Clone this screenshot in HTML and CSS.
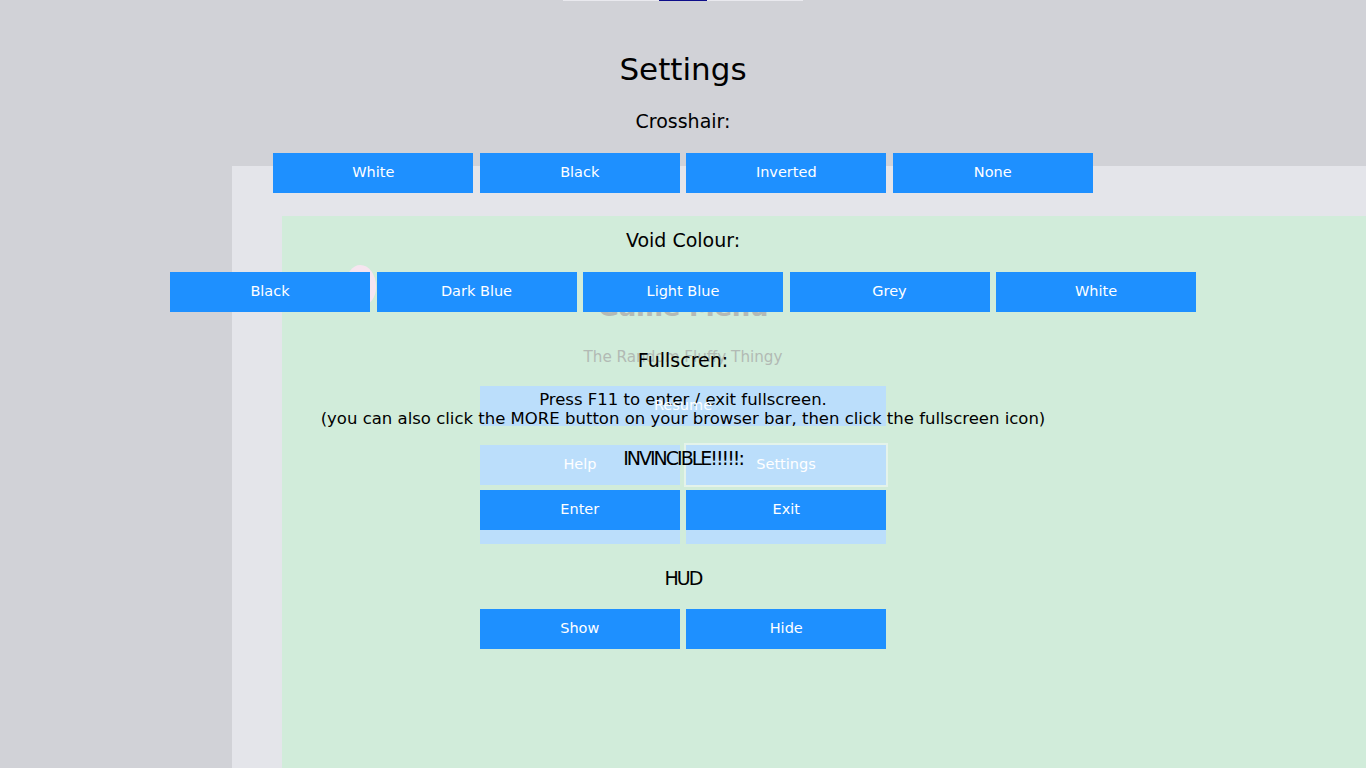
FILE: index.html
```html
<!DOCTYPE html>
<html lang="en">
<head>
<meta charset="utf-8">
<title>Settings</title>
<link rel="stylesheet" href="styles.css">
</head>
<body>
<div class="stage">
  <div class="topbar"><div class="thumb"></div></div>

  <div class="panel-outer"><div class="panel-inner"></div></div>

  <div class="menu">
    <div class="menu-title-wrap">
      <div class="blob"></div>
      <div class="menu-title">Game Menu</div>
    </div>
    <div class="menu-sub">The Random Fluffy Thingy</div>
    <div class="menu-row"><div class="mbtn wide"><span class="mbtn-top">Resume</span></div></div>
    <div class="menu-row">
      <div class="mbtn">Help</div>
      <div class="mbtn selected">Settings</div>
    </div>
    <div class="menu-row">
      <div class="mbtn"></div>
      <div class="mbtn"></div>
    </div>
  </div>

  <div class="settings">
    <h1 class="title">Settings</h1>

    <h3 class="label">Crosshair:</h3>
    <div class="row">
      <button class="btn">White</button>
      <button class="btn">Black</button>
      <button class="btn">Inverted</button>
      <button class="btn">None</button>
    </div>

    <h3 class="label">Void Colour:</h3>
    <div class="row">
      <button class="btn">Black</button>
      <button class="btn">Dark Blue</button>
      <button class="btn">Light Blue</button>
      <button class="btn">Grey</button>
      <button class="btn">White</button>
    </div>

    <h3 class="label label-tight">Fullscren:</h3>
    <p class="note">Press F11 to enter / exit fullscreen.<br>(you can also click the MORE button on your browser bar, then click the fullscreen icon)</p>

    <h3 class="label label-inv">INVINCIBLE!!!!!:</h3>
    <div class="row">
      <button class="btn">Enter</button>
      <button class="btn">Exit</button>
    </div>

    <h3 class="label label-hud">HUD</h3>
    <div class="row">
      <button class="btn">Show</button>
      <button class="btn">Hide</button>
    </div>
  </div>
</div>
</body>
</html>
```

FILE: styles.css
```css
* { box-sizing: border-box; }

html, body {
  margin: 0;
  padding: 0;
}

body {
  background: #d1d2d7;
  font-family: "DejaVu Sans", "Noto Sans", sans-serif;
  color: #000;
  overflow: hidden;
}

.stage {
  display: grid;
  width: 1366px;
  height: 768px;
  overflow: hidden;
}

.stage > * {
  grid-area: 1 / 1;
}

/* top scroll indicator */
.topbar {
  justify-self: center;
  align-self: start;
  width: 240px;
  height: 1px;
  background: #e9e9ee;
  padding-left: 96px;
  display: flex;
}
.thumb {
  width: 48px;
  height: 1px;
  background: #0e0e8a;
}

/* background panels */
.panel-outer {
  margin: 166px 0 0 232px;
  background: #e4e5ea;
  padding: 50px 0 0 50px;
  display: flex;
}
.panel-inner {
  flex: 1;
  background: #d1ecda;
}

/* faded game menu behind */
.menu {
  display: flex;
  flex-direction: column;
  align-items: center;
  padding-top: 288px;
}
.menu-title-wrap {
  position: relative;
}
.menu-title {
  font-size: 26px;
  line-height: 38px;
  color: #b4bab5;
  font-weight: bold;
  letter-spacing: -0.3px;
}
.blob {
  position: absolute;
  left: -252px;
  top: -23px;
  width: 30px;
  height: 40px;
  border-radius: 50% 55% 45% 45%;
  background: #f6e5f0;
}
.menu-sub {
  margin-top: 22px;
  font-size: 15.2px;
  line-height: 19px;
  color: #b2bab4;
}
.menu-row {
  display: flex;
  gap: 6px;
  margin-top: 19px;
}
.mbtn {
  width: 200px;
  height: 40px;
  background: #bbdefb;
  color: #fff;
  font-size: 14.5px;
  padding-bottom: 2px;
  display: flex;
  align-items: center;
  justify-content: center;
}
.mbtn.wide {
  width: 406px;
}
.mbtn-top {
  position: relative;
  z-index: 3;
}
.mbtn.selected {
  outline: 2px solid #e4f3ea;
}

/* settings overlay */
.settings {
  position: relative;
  z-index: 2;
  display: flex;
  flex-direction: column;
  align-items: center;
  padding-top: 50px;
}
.title {
  margin: 0 0 21px;
  font-size: 31px;
  line-height: 38px;
  font-weight: normal;
}
.label {
  margin: 0 0 20px;
  font-size: 19px;
  line-height: 24px;
  font-weight: normal;
}
.label-tight {
  margin-top: 1px;
  margin-bottom: 18px;
}
.label-inv {
  letter-spacing: -2px;
}
.label-hud {
  margin-top: 1px;
  margin-bottom: 19px;
  letter-spacing: -2px;
}
.row {
  display: flex;
  gap: 6.5px;
  margin-bottom: 35px;
}
.btn {
  width: 200px;
  height: 40px;
  border: none;
  margin: 0;
  padding: 0 0 2px;
  background: #1e90ff;
  color: #fff;
  font-family: inherit;
  font-size: 14.5px;
  display: flex;
  align-items: center;
  justify-content: center;
}
.note {
  margin: 0 0 18px;
  font-size: 16.5px;
  line-height: 19px;
  text-align: center;
}
```
